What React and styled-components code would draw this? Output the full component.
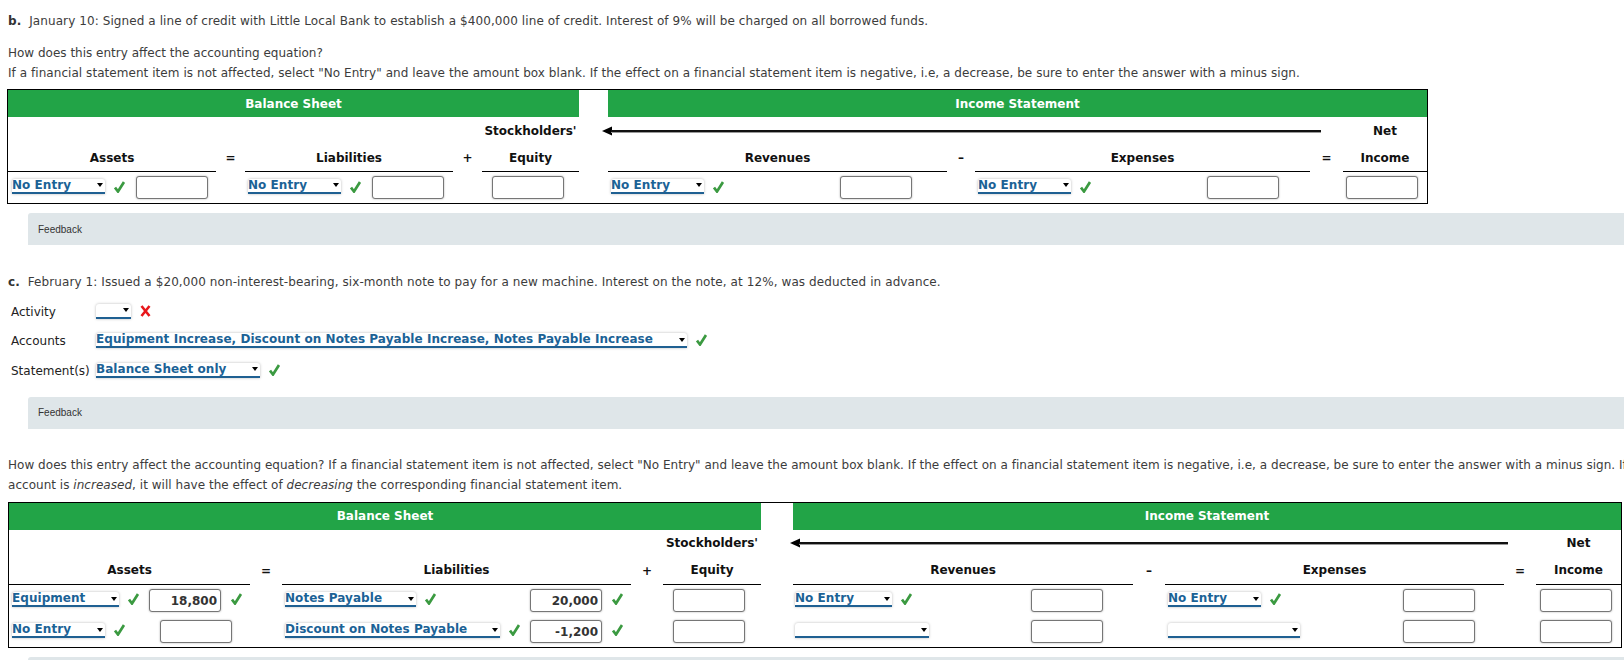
import React from "react";
import styled, { createGlobalStyle } from "styled-components";

const Global = createGlobalStyle`
  html, body { margin: 0; padding: 0; background: #fff; overflow: hidden; }
  body { font-family: "DejaVu Sans", Verdana, sans-serif; font-size: 12px; color: #3c3c3c; }
`;
const Page = styled.div`
  width: 1624px; height: 660px; overflow: hidden;
`;
const Content = styled.main`
  width: 1652px; padding: 11px 0 0 8px; box-sizing: border-box;
`;
const Para = styled.p`
  margin: ${(p) => p.$top ?? 0}px 0 0; line-height: 20px; white-space: ${(p) => (p.$wrap ? "normal" : "nowrap")};
  letter-spacing: ${(p) => p.$ls ?? 0}px;
  b { color: #333; margin-right: 4px; }
`;
const Feedback = styled.div`
  margin: ${(p) => p.$top}px 0 0 20px; height: 32px; background: #dfe6e9; border-radius: 3px 0 0 0;
  display: flex; align-items: center; padding-left: 10px; width: 1640px; box-sizing: border-box;
  font: 10px "Liberation Sans", Arial, sans-serif; color: #333;
`;
const Sheet = styled.table`
  margin: ${(p) => p.$top}px 0 0 ${(p) => p.$shift ?? 0}px; table-layout: fixed; border-collapse: separate; border-spacing: 0;
  width: ${(p) => p.$width}px; border: 1px solid #000; box-sizing: border-box; color: #000;
`;
const Band = styled.th`
  height: 27px; padding: 0; background: ${(p) => (p.$gap ? "#fff" : "#22a447")}; color: #fff; font-size: 12px; font-weight: 700;
`;
const Head = styled.th`
  height: 27px; padding: 0; font-size: 12px; font-weight: 700; text-align: center; color: #111;
  border-bottom: ${(p) => (p.$rule ? "1px solid #000" : "0")};
`;
const ArrowCell = styled.td`
  padding: 0 ${(p) => p.$right}px 0 ${(p) => p.$left}px; height: 27px;
`;
const ArrowLine = styled.div`
  display: flex; align-items: center;
`;
const Shaft = styled.div`
  flex: 1; height: 2px; margin-left: -1px; background: #111; box-shadow: 0 1px 0 #999;
`;
const Cell = styled.td`
  height: 31px; padding: 0; box-sizing: border-box;
`;
const CellRow = styled.div`
  display: flex; align-items: center; padding-left: ${(p) => p.$left}px; padding-right: ${(p) => p.$right}px;
`;
const Pick = styled.div`
  width: ${(p) => p.$w}px; height: 15px; box-sizing: border-box; flex: none; margin-top: ${(p) => p.$lift}px;
  display: flex; align-items: center; justify-content: space-between; padding-right: 2px;
  background: #fff; border-bottom: 2px solid #1f6092; border-radius: 3px 3px 0 0;
  box-shadow: 0 0 3px rgba(0,0,0,.28); color: #1b6296; font-size: 12px; font-weight: 700; line-height: 13px; white-space: nowrap;
  letter-spacing: .05px;
`;
const Caret = styled.i`
  flex: none; width: 0; height: 0; border-left: 3.5px solid transparent; border-right: 3.5px solid transparent; border-top: 4px solid #000;
`;
const Mark = styled.svg`
  flex: none; width: 11px; height: 12px; margin-left: ${(p) => p.$gap ?? 9}px; margin-top: -2px;
`;
const Slot = styled.div`
  margin-left: auto; display: flex; align-items: center;
`;
const Amount = styled.input`
  width: 72px; height: 23px; box-sizing: border-box; padding: 1px 3px 0 0; margin: 0;
  border: 1px solid #767676; border-radius: 3px; box-shadow: 0 0 2px rgba(0,0,0,.35); background: #fff;
  text-align: right; font: 700 12px "DejaVu Sans", Verdana, sans-serif; color: #333;
`;
const FormGrid = styled.div`
  margin-top: 5px; display: grid; grid-template-columns: 88px auto 1fr; grid-auto-rows: 29.5px; align-items: center;
`;
const FormLabel = styled.div`
  padding-left: 3px; color: #222; white-space: nowrap; font-size: 12px;
`;
const FormPick = styled.div`
  display: flex; align-items: center; grid-column: 2 / span 2;
`;

const Check = ({ gap }) => (
  <Mark $gap={gap} viewBox="0 0 11 12">
    <path d="M1 6.5 L4 10.5 L10 1" fill="none" stroke="#3b9a41" strokeWidth="2.7" />
  </Mark>
);
const Cross = () => (
  <Mark viewBox="0 0 11 12">
    <path d="M1.5 1 L9.5 11 M9.5 1 L1.5 11" fill="none" stroke="#e8171b" strokeWidth="2.6" />
  </Mark>
);
const Select = ({ w, lift = -1, children }) => (
  <Pick $w={w} $lift={lift}>
    <span>{children}</span>
    <Caret />
  </Pick>
);
const Arrow = ({ left, right, span }) => (
  <ArrowCell colSpan={span} $left={left} $right={right}>
    <ArrowLine>
      <svg width="10" height="10" viewBox="0 0 10 10">
        <path d="M0 5 L10 0.5 L10 9.5 Z" fill="#000" />
      </svg>
      <Shaft />
    </ArrowLine>
  </ArrowCell>
);

const DataCell = ({ c, lift }) => (
  <Cell colSpan={c.span}>
    <CellRow $left={c.left ?? 0} $right={c.right}>
      {c.pick && <Select w={c.pick} lift={lift}>{c.label}</Select>}
      {c.pick && !c.noCheck && <Check />}
      <Slot>
        <Amount readOnly value={c.value ?? ""} />
        {c.done && <Check gap={10} />}
      </Slot>
    </CellRow>
  </Cell>
);

const Statement = ({ cols, width, top, shift, arrow, rows, lift }) => (
  <Sheet $width={width} $top={top} $shift={shift}>
    <colgroup>{cols.map((w, i) => <col key={i} style={{ width: w }} />)}</colgroup>
    <tbody>
      <tr>
        <Band colSpan={5}>Balance Sheet</Band>
        <Band $gap />
        <Band colSpan={5}>Income Statement</Band>
      </tr>
      <tr>
        <Head colSpan={4} />
        <Head>Stockholders'</Head>
        <Arrow span={5} left={arrow[0]} right={arrow[1]} />
        <Head>Net</Head>
      </tr>
      <tr>
        <Head $rule>Assets</Head>
        <Head>=</Head>
        <Head $rule>Liabilities</Head>
        <Head>+</Head>
        <Head $rule>Equity</Head>
        <Head />
        <Head $rule>Revenues</Head>
        <Head>–</Head>
        <Head $rule>Expenses</Head>
        <Head>=</Head>
        <Head $rule>Income</Head>
      </tr>
      {rows.map((r, i) => (
        <tr key={i}>
          {r.map((c, j) => (c.blank ? <Cell key={j} colSpan={c.span} /> : <DataCell key={j} c={c} lift={lift} />))}
        </tr>
      ))}
    </tbody>
  </Sheet>
);

const blank = (span = 1) => ({ blank: true, span });

const row1 = [
  [
    { left: 4, pick: 93, label: "No Entry", right: 8 }, blank(),
    { left: 3, pick: 93, label: "No Entry", right: 9 }, blank(),
    { right: 15 }, blank(),
    { left: 3, pick: 93, label: "No Entry", right: 35 }, blank(),
    { left: 3, pick: 93, label: "No Entry", right: 31 }, blank(),
    { right: 9 },
  ],
];
const row2 = [
  [
    { left: 3, pick: 107, label: "Equipment", value: "18,800", done: true, right: 8 }, blank(),
    { left: 3, pick: 131, label: "Notes Payable", value: "20,000", done: true, right: 8 }, blank(),
    { right: 16 }, blank(),
    { left: 2, pick: 97, label: "No Entry", right: 30 }, blank(),
    { left: 3, pick: 93, label: "No Entry", right: 29 }, blank(),
    { right: 9 },
  ],
  [
    { left: 3, pick: 93, label: "No Entry", right: 18 }, blank(),
    { left: 3, pick: 215, label: "Discount on Notes Payable", value: "-1,200", done: true, right: 8 }, blank(),
    { right: 16 }, blank(),
    { left: 2, pick: 134, label: "", noCheck: true, right: 30 }, blank(),
    { left: 3, pick: 132, label: "", noCheck: true, right: 29 }, blank(),
    { right: 9 },
  ],
];

export default function App() {
  return (
    <Page>
      <Global />
      <Content>
        <Para $ls={0.087}><b>b.</b> January 10: Signed a line of credit with Little Local Bank to establish a $400,000 line of credit. Interest of 9% will be charged on all borrowed funds.</Para>
        <Para $top={12}>How does this entry affect the accounting equation?</Para>
        <Para $ls={0.053}>If a financial statement item is not affected, select "No Entry" and leave the amount box blank. If the effect on a financial statement item is negative, i.e, a decrease, be sure to enter the answer with a minus sign.</Para>
        <Statement
          top={6}
          shift={-1}
          width={1421}
          lift={-3}
          cols={[208, 29, 208, 29, 97, 29, 339, 28, 335, 33, 84]}
          arrow={[23, 22]}
          rows={row1}
        />
        <Feedback $top={9}>Feedback</Feedback>
        <Para $top={27} $ls={0.087}><b>c.</b> February 1: Issued a $20,000 non-interest-bearing, six-month note to pay for a new machine. Interest on the note, at 12%, was deducted in advance.</Para>
        <FormGrid>
          <FormLabel>Activity</FormLabel>
          <FormPick><Select w={35} /><Cross /></FormPick>
          <FormLabel>Accounts</FormLabel>
          <FormPick><Select w={591}>Equipment Increase, Discount on Notes Payable Increase, Notes Payable Increase</Select><Check /></FormPick>
          <FormLabel>Statement(s)</FormLabel>
          <FormPick><Select w={164}>Balance Sheet only</Select><Check /></FormPick>
        </FormGrid>
        <Feedback $top={11}>Feedback</Feedback>
        <Para $top={26} $wrap $ls={0.03}>How does this entry affect the accounting equation? If a financial statement item is not affected, select "No Entry" and leave the amount box blank. If the effect on a financial statement item is negative, i.e, a decrease, be sure to enter the answer with a minus sign. If an account is <em>increased</em>, it will have the effect of <em>decreasing</em> the corresponding financial statement item.</Para>
        <Statement
          top={7}
          width={1613}
          lift={-1}
          cols={[241, 32, 349, 32, 98, 32, 340, 32, 339, 32, 85]}
          arrow={[29, 28]}
          rows={row2}
        />
        <Feedback $top={9}>&nbsp;</Feedback>
      </Content>
    </Page>
  );
}
